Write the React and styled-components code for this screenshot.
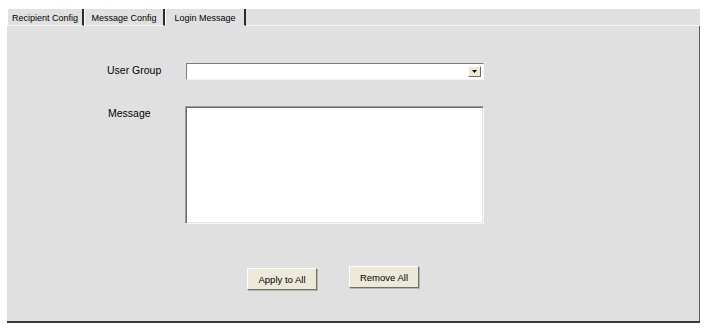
import React from 'react'
import styled, { createGlobalStyle } from "styled-components";

const GlobalStyle = createGlobalStyle`
  html, body {
    margin: 0;
    background: #ffffff;
  }
  body {
    font-family: "Liberation Sans", Arial, sans-serif;
    color: #000000;
  }
`;

const Page = styled.div`
  padding: 9px 11px 0 7px;
  width: 711px;
  box-sizing: border-box;
`;

const TabBar = styled.div`
  display: flex;
  height: 17px;
  background: #e0e0e0;
`;

const Tab = styled.div`
  display: flex;
  align-items: center;
  justify-content: center;
  width: ${({ $width }) => $width}px;
  height: 100%;
  box-sizing: border-box;
  padding-top: 1px;
  font-size: 9px;
  background: #e0e0e0;
  border-left: 1px solid #ffffff;
  border-right: 2px solid #2b2b2b;
  border-bottom: 1px solid ${({ $active }) => ($active ? "#e0e0e0" : "#f6f6f6")};
`;

const TabFill = styled.div`
  flex: 1;
  border-bottom: 1px solid #f6f6f6;
`;

const Panel = styled.div`
  height: 297px;
  background: #e0e0e0;
  border-right: 1px solid #5a5a5a;
  border-bottom: 2px solid #3a3a3a;
  box-sizing: border-box;
  padding: 37px 0 0 100px;
`;

const Form = styled.div`
  display: grid;
  grid-template-columns: 79px 298px;
  row-gap: 26px;
`;

const Label = styled.div`
  font-size: 10.5px;
  line-height: 14px;
  padding-top: ${({ $top }) => $top}px;
  padding-left: ${({ $left }) => $left || 0}px;
`;

const Select = styled.div`
  position: relative;
  height: 17px;
  background: #ffffff;
  box-sizing: border-box;
  border-top: 1px solid #7f7d72;
  border-left: 1px solid #7f7d72;
  border-right: 1px solid #f3f2ec;
  border-bottom: 1px solid #f3f2ec;
  display: flex;
  justify-content: flex-end;
  align-items: center;
  padding-right: 2px;
`;

const DropButton = styled.div`
  width: 13px;
  height: 11px;
  box-sizing: border-box;
  background: #ece9d8;
  border-top: 1px solid #ffffff;
  border-left: 1px solid #ffffff;
  border-right: 1px solid #716f64;
  border-bottom: 1px solid #716f64;
  display: flex;
  align-items: center;
  justify-content: center;
`;

const TextArea = styled.div`
  height: 118px;
  margin-left: -1px;
  background: #ffffff;
  box-sizing: border-box;
  border-top: 1px solid #a09e94;
  border-left: 1px solid #a09e94;
  border-right: 1px solid #f7f7f3;
  border-bottom: 1px solid #f7f7f3;
  box-shadow: inset 1px 1px 0 #6e6c62, inset -1px -1px 0 #ece9d8;
`;

const ButtonRow = styled.div`
  display: flex;
  align-items: flex-start;
  gap: 32px;
  margin-top: 42px;
  padding-left: 140px;
`;

const Button = styled.div`
  width: 70px;
  height: 22px;
  margin-top: ${({ $drop }) => $drop || 0}px;
  box-sizing: border-box;
  background: #ece9d8;
  border-top: 1px solid #ffffff;
  border-left: 1px solid #ffffff;
  border-right: 1px solid #716f64;
  border-bottom: 1px solid #716f64;
  box-shadow: 1px 1px 0 #b8b6aa;
  display: flex;
  align-items: center;
  justify-content: center;
  font-size: 9.5px;
`;

const App = () => {
  return (
    <Page>
      <GlobalStyle />
      <TabBar>
        <Tab $width={77}>Recipient Config</Tab>
        <Tab $width={81}>Message Config</Tab>
        <Tab $width={81} $active>Login Message</Tab>
        <TabFill />
      </TabBar>
      <Panel>
        <Form>
          <Label $top={0}>User Group</Label>
          <Select>
            <DropButton>
              <svg width="5" height="3" viewBox="0 0 5 3">
                <path d="M0 0h5L2.5 3z" fill="#000" />
              </svg>
            </DropButton>
          </Select>
          <Label $top={0} $left={1}>Message</Label>
          <TextArea />
        </Form>
        <ButtonRow>
          <Button $drop={2}>Apply to All</Button>
          <Button>Remove All</Button>
        </ButtonRow>
      </Panel>
    </Page>
  )
}

export default App
